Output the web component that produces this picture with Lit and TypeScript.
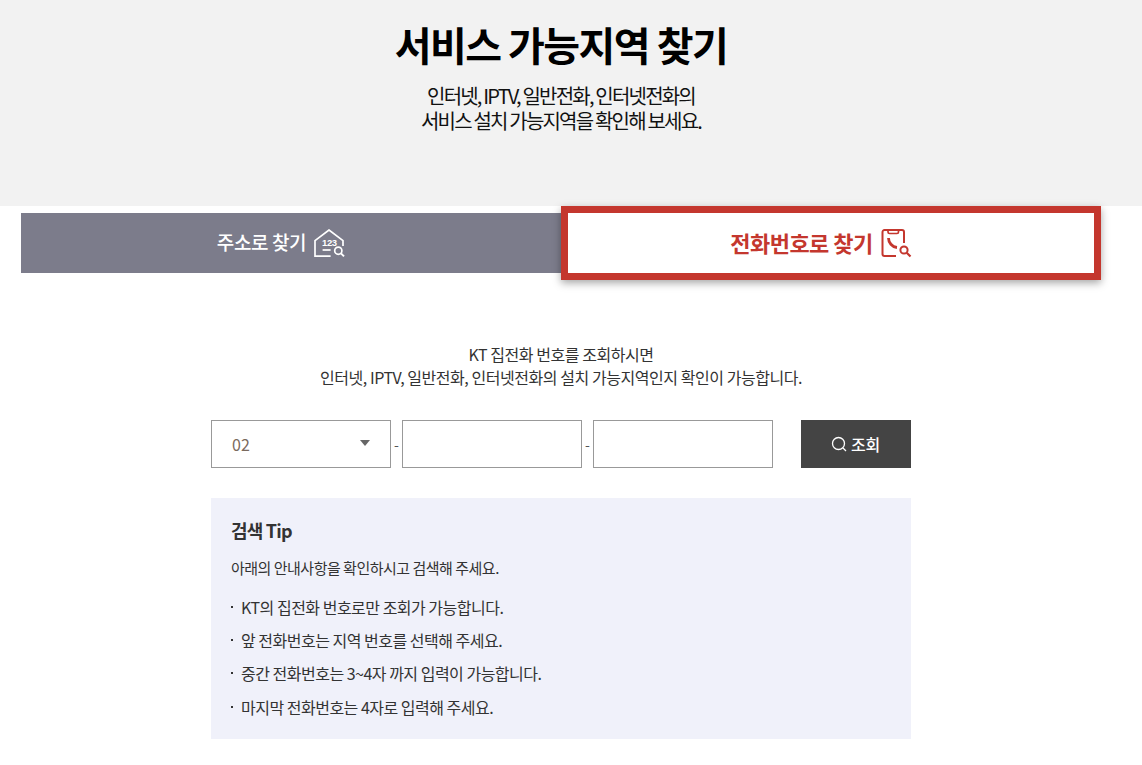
import { LitElement, html, css } from "lit";
import { customElement } from "lit/decorators.js";

@customElement("app-root")
export class AppRoot extends LitElement {
  static styles = css`
    :host { display: block; font-family: "Noto Sans CJK KR", "Noto Sans", sans-serif; color: #333; background: #fff; height: 765px; overflow: hidden; }
    .hero { height: 206px; background: #f2f2f2; text-align: center; box-sizing: border-box; padding: 14px 20px 0 0; color: #000; }
    h1 { margin: 0; font-size: 40px; line-height: 60px; font-weight: 700; letter-spacing: -1.55px; }
    .hero p { margin: 9px 0 0; font-size: 20px; line-height: 25px; letter-spacing: -1.8px; color: #111; }
    .page { width: 1122px; }
    .tabs { display: flex; margin: 0 21px; height: 60px; padding-top: 7px; }
    .tab { display: flex; align-items: center; justify-content: center; gap: 8px; box-sizing: border-box; letter-spacing: -0.4px; flex: 0 0 540px; padding-right: 20px; }
    .tab svg { flex: none; }
    .tab span { margin-bottom: 3px; }
    .tab.off { background: #7c7c8b; color: #fff; font-size: 19px; font-weight: 500; }
    .tab.on { height: 74px; margin-top: -7px; border: 7px solid #c4372e; background: #fff; color: #c4372e; font-size: 22px; font-weight: 700; letter-spacing: -0.55px; box-shadow: 0 3px 8px rgba(0,0,0,.35); }
    .desc { margin: 70px 0 0; text-align: center; font-size: 16px; line-height: 23px; letter-spacing: -0.45px; color: #333; }
    .form { display: flex; align-items: center; width: 700px; margin: 31px auto 0; height: 48px; }
    .field { box-sizing: border-box; width: 180px; height: 48px; border: 1px solid #999; background: #fff; }
    .select { display: flex; align-items: center; justify-content: space-between; padding: 0 20px; font-size: 16px; color: #7a6a5e; }
    .arrow { width: 0; height: 0; border-left: 5.5px solid transparent; border-right: 5.5px solid transparent; border-top: 6px solid #666; margin-bottom: 3px; }
    .dash { width: 11px; text-align: center; font-size: 14px; color: #555; }
    .btn { margin-left: 28px; width: 110px; height: 48px; background: #444; color: #fff; display: flex; align-items: center; justify-content: center; gap: 4px; font-size: 16px; font-weight: 500; letter-spacing: -0.3px; padding-right: 1px; box-sizing: border-box; }
    .tip { box-sizing: border-box; width: 700px; height: 241px; margin: 30px auto 0; background: #f0f1fa; padding: 17px 20px; }
    h2 { margin: 0; font-size: 18px; line-height: 30px; font-weight: 700; letter-spacing: -0.8px; color: #333; }
    .tip p { margin: 12px 0 0; font-size: 15px; line-height: 22px; letter-spacing: -0.5px; }
    ul { list-style: none; margin: 12px 0 0; padding: 0; }
    li { position: relative; padding-left: 10px; font-size: 16px; line-height: 33.2px; letter-spacing: -0.5px; }
    li::before { content: ""; position: absolute; left: 0; top: 15px; width: 2px; height: 2px; background: #333; }
  `;
  render() {
    return html`
      <div class="hero">
        <h1>서비스 가능지역 찾기</h1>
        <p>인터넷, IPTV, 일반전화, 인터넷전화의<br />서비스 설치 가능지역을 확인해 보세요.</p>
      </div>
      <div class="page">
        <div class="tabs">
          <div class="tab off"><span>주소로 찾기</span>
            <svg width="31" height="29" viewBox="0 0 31 29" fill="none" stroke="#fff" stroke-width="1.7">
              <path d="M1 28V11.6L15 1L29 11.6V17M1 27.2H16.6"/>
              <path d="M8.6 21H16.6" />
              <text x="8" y="17" font-size="9.5" font-weight="700" fill="#fff" stroke="none" font-family="Liberation Sans">123</text>
              <circle cx="24.3" cy="21.7" r="3.6"/><path d="M27 24.4L30 27.4" stroke-width="2"/>
            </svg>
          </div>
          <div class="tab on"><span>전화번호로 찾기</span>
            <svg width="31" height="29" viewBox="0 0 31 29" fill="none" stroke="#c4372e" stroke-width="2">
              <path d="M15 27H3.5a2 2 0 0 1-2-2V3a2 2 0 0 1 2-2H21a2 2 0 0 1 2 2V14"/>
              <path d="M7 1V3a1.5 1.5 0 0 0 1.5 1.5H16a1.5 1.5 0 0 0 1.5-1.5V1" stroke-width="1.7"/>
              <path d="M7.5 9C7.5 13.5 11 18 16 18.5" stroke-width="2.8"/>
              <circle cx="23" cy="21" r="3.6"/><path d="M25.7 23.7L29.5 27.5" stroke-width="2.2"/>
            </svg>
          </div>
        </div>
        <div class="desc">KT 집전화 번호를 조회하시면<br />인터넷, IPTV, 일반전화, 인터넷전화의 설치 가능지역인지 확인이 가능합니다.</div>
        <div class="form">
          <div class="field select"><span>02</span><span class="arrow"></span></div>
          <span class="dash">-</span>
          <div class="field"></div>
          <span class="dash">-</span>
          <div class="field"></div>
          <div class="btn">
            <svg width="16" height="16" viewBox="0 0 16 16" fill="none" stroke="#fff" stroke-width="1.3"><circle cx="7.5" cy="7.5" r="6"/><path d="M12 12L15 15"/></svg>
            <span>조회</span>
          </div>
        </div>
        <div class="tip">
          <h2>검색 Tip</h2>
          <p>아래의 안내사항을 확인하시고 검색해 주세요.</p>
          <ul>
            <li>KT의 집전화 번호로만 조회가 가능합니다.</li>
            <li>앞 전화번호는 지역 번호를 선택해 주세요.</li>
            <li>중간 전화번호는 3~4자 까지 입력이 가능합니다.</li>
            <li>마지막 전화번호는 4자로 입력해 주세요.</li>
          </ul>
        </div>
      </div>
    `;
  }
}
